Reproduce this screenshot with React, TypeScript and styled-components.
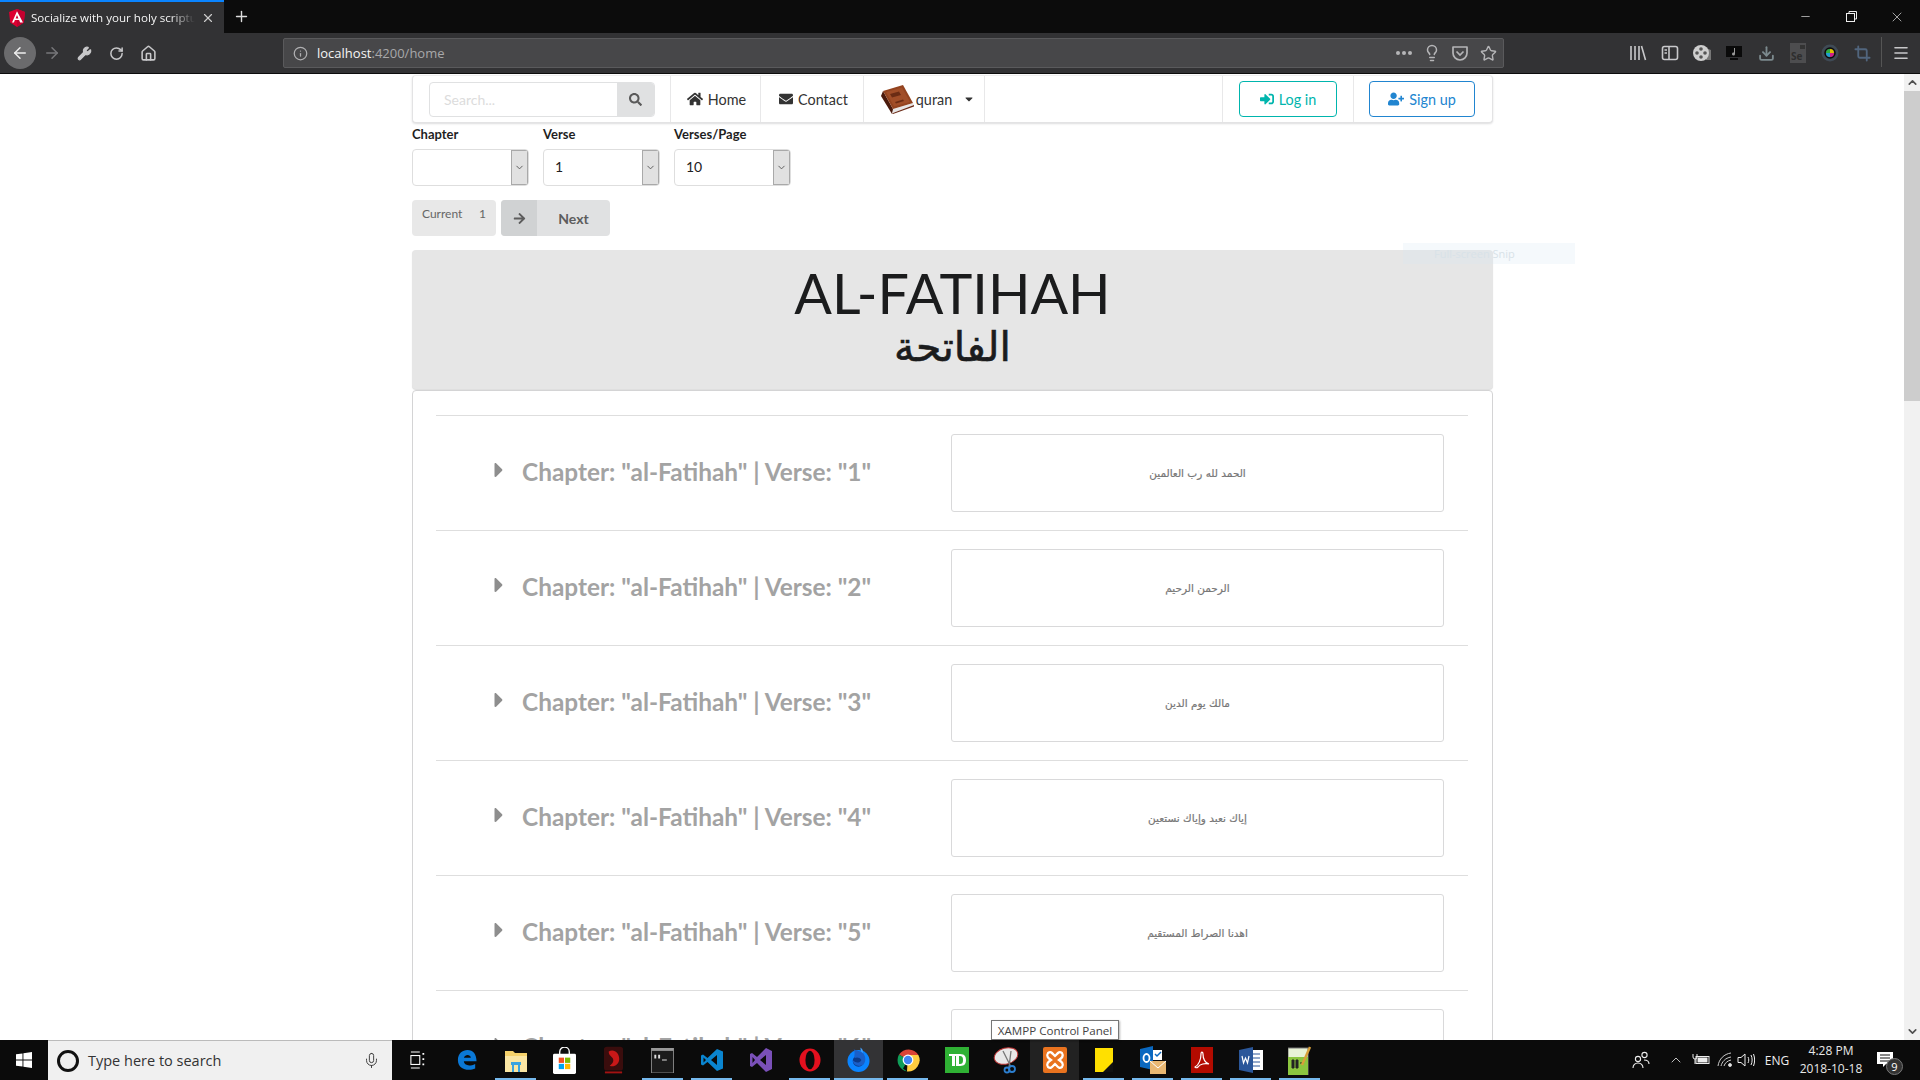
import React from "react";
import styled, { createGlobalStyle } from "styled-components";
import {
  FaHome, FaEnvelope, FaSearch, FaSignInAlt, FaUserPlus, FaArrowRight, FaCaretRight, FaCaretDown,
} from "react-icons/fa";
import { ArrowLeft, ArrowRight, Wrench, RotateCw, Home, Info, Lightbulb, Star, X, Plus, Minus, ChevronDown, ChevronUp, Mic, Download, Crop, Menu as MenuIcon } from "lucide-react";

const Global = createGlobalStyle`
  html, body { margin: 0; padding: 0; background: #fff; overflow: hidden; }
  * { box-sizing: border-box; }
  body { font-family: Lato, "Open Sans", sans-serif; }
`;

const Shell = styled.div`
  position: relative;
  width: 1920px;
  height: 1080px;
  display: flex;
  flex-direction: column;
  overflow: hidden;
`;

/* Browser chrome */
const TabStrip = styled.div`
  height: 33px;
  background: #0c0c0c;
  display: flex;
  align-items: stretch;
  color: #fff;
  font-family: "Open Sans", sans-serif;
`;
const Tab = styled.div`
  width: 224px;
  background: #323234;
  border-top: 2px solid #0a84ff;
  display: flex;
  align-items: center;
  padding: 0 9px;
  gap: 6px;
`;
const TabTitle = styled.span`
  flex: 1;
  font-size: 11.6px;
  white-space: nowrap;
  overflow: hidden;
  color: #f4f4f4;
  -webkit-mask-image: linear-gradient(90deg, #000 85%, transparent);
  mask-image: linear-gradient(90deg, #000 85%, transparent);
`;
const NewTab = styled.div`
  width: 34px;
  display: flex;
  align-items: center;
  justify-content: center;
  color: #ddd;
`;
const StripSpacer = styled.div`flex: 1;`;
const WindowButton = styled.div`
  width: 46px;
  display: flex;
  align-items: center;
  justify-content: center;
  color: #eee;
`;
const Toolbar = styled.div`
  height: 41px;
  background: #323234;
  border-bottom: 1px solid #0c0c0c;
  display: flex;
  align-items: center;
  padding-left: 4px;
`;
const ToolSlot = styled.div<{ $dim?: boolean; $round?: boolean }>`
  width: 32px;
  height: 32px;
  flex: none;
  display: flex;
  align-items: center;
  justify-content: center;
  border-radius: 50%;
  color: ${(p) => (p.$dim ? "#77777a" : "#c8c8ca")};
  background: ${(p) => (p.$round ? "#6b6b6d" : "transparent")};
`;
const UrlBar = styled.div`
  margin-left: 119px;
  width: 1221px;
  height: 30px;
  background: #474749;
  border: 1px solid #5a5a5c;
  border-radius: 2px;
  display: flex;
  align-items: center;
  padding: 0 1px 0 9px;
  font-family: "Open Sans", sans-serif;
  font-size: 13px;
  color: #a8a8aa;
`;
const UrlHost = styled.span`color: #f5f5f5; margin-left: 9px;`;
const UrlSpacer = styled.div`flex: 1;`;
const UrlAction = styled.div`
  width: 28px;
  display: flex;
  justify-content: center;
  color: #b5b5b7;
`;
const ToolGroup = styled.div`
  margin-left: 118px;
  display: flex;
`;
const ToolDivider = styled.div`
  width: 1px;
  height: 30px;
  background: #555;
  margin: 0 3px 0 3px;
`;

/* Page area */
const Viewport = styled.div`
  flex: 1;
  min-height: 0;
  display: flex;
`;
const PageScroll = styled.div`
  flex: 1;
  min-width: 0;
  overflow: hidden;
  padding-left: 412px;
`;
const Container = styled.div`
  width: 1081px;
`;
const Scrollbar = styled.div`
  width: 16px;
  background: #f1f1f1;
  display: flex;
  flex-direction: column;
  align-items: stretch;
`;
const ScrollArrow = styled.div`
  height: 17px;
  display: flex;
  align-items: center;
  justify-content: center;
  color: #505050;
`;
const ScrollTrack = styled.div`flex: 1;`;
const ScrollThumb = styled.div`
  height: 310px;
  background: #cdcdcd;
`;

const NavMenu = styled.nav`
  height: 48px;
  margin-top: 1px;
  background: #fff;
  border: 1px solid #e3e3e4;
  border-top-color: #eee;
  border-radius: 4px;
  box-shadow: 0 1px 2px rgba(34, 36, 38, 0.15);
  display: flex;
  align-items: stretch;
  font-size: 14.4px;
  color: #333;
`;
const NavItem = styled.div<{ $w: number; $pad?: number }>`
  width: ${(p) => p.$w}px;
  flex: none;
  display: flex;
  align-items: center;
  justify-content: center;
  gap: 5px;
  padding-left: ${(p) => p.$pad || 0}px;
  border-right: 1px solid #e8e8e9;
  white-space: nowrap;
`;
const SearchCell = styled.div`
  width: 258px;
  flex: none;
  display: flex;
  align-items: center;
  padding-left: 16px;
  border-right: 1px solid #e8e8e9;
`;
const SearchBox = styled.div`
  width: 226px;
  height: 35px;
  display: flex;
  border: 1px solid #e0e1e2;
  border-radius: 4px;
  overflow: hidden;
`;
const SearchInput = styled.div`
  flex: 1;
  color: #dcdcdc;
  padding-left: 14px;
  display: flex;
  align-items: center;
  font-size: 14px;
`;
const SearchButton = styled.div`
  width: 37px;
  background: #e0e1e2;
  color: #5a5a5a;
  display: flex;
  align-items: center;
  justify-content: center;
`;
const NavSpacer = styled.div`flex: 1;`;
const NavEnd = styled.div<{ $pad: string }>`
  flex: none;
  display: flex;
  align-items: center;
  padding: ${(p) => p.$pad};
  border-left: 1px solid #e8e8e9;
`;
const OutlineButton = styled.div<{ $c: string; $w: number }>`
  width: ${(p) => p.$w}px;
  height: 36px;
  border: 1px solid ${(p) => p.$c};
  border-radius: 4px;
  color: ${(p) => p.$c};
  display: flex;
  align-items: center;
  justify-content: center;
  gap: 5px;
  font-size: 14.4px;
`;
const BookWrap = styled.span`
  display: flex;
  margin-right: -4px;
`;
const Caret = styled.span`
  display: flex;
  margin-left: 6px;
  color: #333;
`;

const Filters = styled.div`
  display: flex;
  gap: 14px;
  margin-top: 1px;
`;
const Field = styled.div`
  width: 117px;
  display: flex;
  flex-direction: column;
`;
const FieldLabel = styled.label`
  height: 20px;
  margin-bottom: 5px;
  display: flex;
  align-items: center;
  font-size: 13px;
  font-weight: 700;
  color: #1f1f1f;
`;
const SelectBox = styled.div`
  height: 37px;
  border: 1px solid #dedede;
  border-radius: 4px;
  display: flex;
  font-size: 14px;
  color: #222;
  overflow: hidden;
`;
const SelectValue = styled.div`
  flex: 1;
  padding: 0 0 2px 11px;
  display: flex;
  align-items: center;
`;
const SelectArrow = styled.div`
  width: 17px;
  background: #e1e1e1;
  border: 1px solid #a9a9a9;
  display: flex;
  align-items: center;
  justify-content: center;
  color: #555;
`;
const Pager = styled.div`
  display: flex;
  gap: 5px;
  margin-top: 14px;
`;
const CurrentTag = styled.div`
  width: 84px;
  height: 36px;
  background: #e8e8e8;
  border-radius: 4px;
  color: #666;
  font-size: 12px;
  display: flex;
  justify-content: space-between;
  padding: 6px 10px 0;
`;
const NextButton = styled.div`
  width: 109px;
  height: 36px;
  background: #e0e1e2;
  border-radius: 4px;
  display: flex;
  overflow: hidden;
  color: #5d5d5d;
  font-size: 14px;
  font-weight: 700;
`;
const NextIcon = styled.div`
  width: 36px;
  background: #d0d2d3;
  display: flex;
  align-items: center;
  justify-content: center;
`;
const NextLabel = styled.div`
  flex: 1;
  display: flex;
  align-items: center;
  justify-content: center;
`;

const ChapterHeader = styled.header`
  margin-top: 14px;
  height: 139px;
  background: #e6e6e6;
  border-radius: 4px;
  box-shadow: 0 1px 1px rgba(0,0,0,0.14);
  text-align: center;
  color: #1b1c1d;
  overflow: hidden;
`;
const ChapterTitle = styled.h1`
  margin: 12px 0 0;
  font-size: 55.7px;
  line-height: 62px;
  font-weight: 400;
`;
const ChapterArabic = styled.div`
  font-family: "DejaVu Sans", sans-serif;
  font-size: 41px;
  line-height: 44px;
  margin-top: 1px;
  direction: rtl;
  -webkit-text-stroke: 0.6px #1b1c1d;
`;
const VerseCard = styled.section`
  margin-top: 1px;
  background: #fff;
  border: 1px solid #d4d4d5;
  border-radius: 4px;
  padding: 24px 24px 0 23px;
`;
const VerseRow = styled.div`
  height: 115px;
  border-top: 1px solid #dedede;
  padding: 18px 24px 0 0;
  display: flex;
`;
const VerseTitle = styled.div`
  flex: 1;
  height: 78px;
  display: flex;
  align-items: center;
  padding: 0 0 4px 51px;
  gap: 11px;
  font-size: 24.4px;
  font-weight: 700;
  color: #a3a3a3;
  white-space: nowrap;
`;
const CaretBox = styled.span`
  display: flex;
  margin-top: -3px;
  color: #8e8e8e;
`;
const VerseBox = styled.div`
  width: 493px;
  height: 78px;
  flex: none;
  border: 1px solid #d9d9da;
  border-radius: 3px;
  display: flex;
  align-items: center;
  justify-content: center;
  font-family: "DejaVu Sans", sans-serif;
  font-size: 10.5px;
  color: #777;
  direction: rtl;
  -webkit-text-stroke: 0.2px #777;
`;

/* Floating overlays */
const SnipHint = styled.div`
  position: absolute;
  left: 1403px;
  top: 243px;
  width: 172px;
  height: 21px;
  background: rgba(214, 232, 244, 0.25);
  color: #d8e2e8;
  font-family: "Open Sans", sans-serif;
  font-size: 11px;
  padding: 3px 0 0 31px;
`;
const WinTooltip = styled.div`
  position: absolute;
  left: 991px;
  top: 1020px;
  width: 128px;
  height: 20px;
  background: #fff;
  border: 1px solid #777;
  box-shadow: 1px 1px 2px rgba(0,0,0,0.3);
  font-family: "Open Sans", sans-serif;
  font-size: 11.6px;
  color: #444;
  display: flex;
  align-items: center;
  justify-content: center;
  white-space: nowrap;
`;

/* Taskbar */
const Taskbar = styled.footer`
  height: 40px;
  flex: none;
  background: #0b0b0b;
  display: flex;
  align-items: stretch;
  color: #eee;
  font-family: "Open Sans", sans-serif;
`;
const StartButton = styled.div`
  width: 48px;
  display: flex;
  align-items: center;
  justify-content: center;
`;
const TaskSearch = styled.div`
  width: 344px;
  margin-right: 1px;
  background: #f0f0f0;
  border-top: 1px solid #bbb;
  display: flex;
  align-items: center;
  padding: 0 12px 0 9px;
  color: #333;
  font-size: 14.5px;
`;
const Cortana = styled.div`
  width: 22px;
  height: 22px;
  border: 3px solid #111;
  border-radius: 50%;
  margin-right: 9px;
`;
const TaskSearchText = styled.span`flex: 1;`;
const TaskSlot = styled.div<{ $bg?: string }>`
  position: relative;
  width: 49px;
  flex: none;
  display: flex;
  align-items: center;
  justify-content: center;
  background: ${(p) => p.$bg || "transparent"};
`;
const RunningMark = styled.div<{ $wide?: boolean }>`
  position: absolute;
  bottom: 0;
  left: ${(p) => (p.$wide ? "0" : "4px")};
  right: ${(p) => (p.$wide ? "0" : "4px")};
  height: 2px;
  background: #76b9ed;
`;
const TaskSpacer = styled.div`flex: 1;`;
const TrayIcon = styled.div<{ $w: number }>`
  width: ${(p) => p.$w}px;
  flex: none;
  display: flex;
  align-items: center;
  justify-content: center;
  font-size: 12px;
`;
const Clock = styled.div`
  width: 72px;
  flex: none;
  display: flex;
  flex-direction: column;
  align-items: center;
  justify-content: center;
  font-size: 12px;
  line-height: 18px;
  color: #e8e8e8;
  white-space: nowrap;
`;
const NotifyWrap = styled.div`
  position: relative;
  width: 38px;
  flex: none;
  display: flex;
  align-items: center;
  justify-content: center;
  margin-right: 15px;
`;
const NotifyBadge = styled.div`
  position: absolute;
  left: 19px;
  top: 18px;
  width: 17px;
  height: 17px;
  border-radius: 50%;
  background: #333;
  border: 1px solid #777;
  font-size: 11px;
  color: #fff;
  display: flex;
  align-items: center;
  justify-content: center;
`;

/* Drawn icons */
const AngularIcon = () => (
  <svg width="16" height="18" viewBox="0 0 16 18">
    <path d="M8 0 0 3l1.200 10.600L8 18l6.800-4.400L16 3z" fill="#dd0031" />
    <path d="M8 0v18l6.800-4.400L16 3z" fill="#c3002f" />
    <path d="M8 2.200 3 13.500h1.900l1-2.500h4.200l1 2.500H14zM6.600 9.400 8 6l1.400 3.400z" fill="#fff" />
  </svg>
);
const BookIcon = () => (
  <svg width="34" height="30" viewBox="0 0 34 30">
    <path d="M2 7 0 12l11 18 1-5z" fill="#4a1a0c" />
    <path d="M12 25 32 19l1 2-21 8z" fill="#e6e6e6" />
    <path d="M11 30l1-1 21-8v1.500L12 30z" fill="#6b2a16" />
    <path d="M2 7 22 1l10 18-20 6z" fill="#93431f" />
    <path d="M5 8 21 3.500 29 18l-16 4.500z" fill="#a14e28" />
    <path d="M9 10 18 7.500 20 11 11 13.500zM14 18l8-2.500 1 1.500-8 2.500z" fill="#6b2c14" />
  </svg>
);
const LibraryIcon = () => (
  <svg width="18" height="18" viewBox="0 0 18 18" stroke="#c8c8ca" strokeWidth="1.6" fill="none">
    <path d="M2 2v14M6 2v14M10 2v14M12.500 2l4 14" />
  </svg>
);
const SidebarIcon = () => (
  <svg width="18" height="18" viewBox="0 0 18 18" fill="none" stroke="#c8c8ca" strokeWidth="1.6">
    <rect x="1.500" y="2.500" width="15" height="13" rx="2" />
    <path d="M8 3v12M3.500 6H6M3.500 9H6" />
  </svg>
);
const FilmIcon = () => (
  <svg width="20" height="20" viewBox="0 0 20 20">
    <path d="M14 5l5 2v10h-5z" fill="#777" />
    <circle cx="9" cy="10" r="8" fill="#cfcfcf" />
    <circle cx="9" cy="6" r="1.800" fill="#555" />
    <circle cx="9" cy="14" r="1.800" fill="#555" />
    <circle cx="5" cy="10" r="1.800" fill="#555" />
    <circle cx="13" cy="10" r="1.800" fill="#555" />
  </svg>
);
const MonitorIcon = () => (
  <svg width="18" height="18" viewBox="0 0 18 18">
    <rect x="1" y="2" width="16" height="11" fill="#0a0a0a" />
    <rect x="5" y="14" width="8" height="2" fill="#0a0a0a" />
    <path d="M10 4v6a1.500 1.500 0 1 1-1-1.400V4z" fill="#999" />
  </svg>
);
const SeIcon = () => (
  <svg width="16" height="20" viewBox="0 0 16 20">
    <rect width="16" height="20" fill="#4d4d4f" />
    <rect x="10" y="2" width="5" height="4" fill="#333" />
    <text x="1" y="17" fontSize="10" fontWeight="700" fontFamily="Open Sans" fill="#2e2e2e">Se</text>
  </svg>
);
const WheelIcon = () => (
  <svg width="18" height="18" viewBox="0 0 18 18">
    <circle cx="9" cy="9" r="8.500" fill="#3f4a55" />
    <circle cx="9" cy="9" r="5" fill="none" stroke="#0c0c0c" strokeWidth="1.500" />
    <path d="M9 5a4 4 0 0 1 4 4H9z" fill="#e0c000" />
    <path d="M13 9a4 4 0 0 1-4 4V9z" fill="#d0208a" />
    <path d="M9 13a4 4 0 0 1-4-4h4z" fill="#20a0d0" />
    <path d="M5 9a4 4 0 0 1 4-4v4z" fill="#30b040" />
  </svg>
);
const PocketIcon = () => (
  <svg width="18" height="18" viewBox="0 0 18 18" fill="none" stroke="#b5b5b7" strokeWidth="1.700">
    <path d="M2 3h14v6a7 7 0 0 1-14 0z" strokeLinejoin="round" />
    <path d="M5.500 7.500 9 11l3.500-3.500" />
  </svg>
);
const WindowsLogo = () => (
  <svg width="16" height="16" viewBox="0 0 16 16" fill="#fff">
    <path d="M0 2.300 6.500 1.400v6.100H0zM7.400 1.300 16 0v7.500H7.400zM0 8.400h6.500v6.200L0 13.700zM7.400 8.400H16V16l-8.600-1.200z" />
  </svg>
);
const TaskViewIcon = () => (
  <svg width="16" height="18" viewBox="0 0 18 20" fill="none" stroke="#fff" strokeWidth="1.200">
    <path d="M1 1h10M1 19h10" />
    <rect x="1" y="5" width="10" height="10" />
    <path d="M15 2v2M15 8v2M15 14v2" strokeWidth="2" />
  </svg>
);
const EdgeIcon = () => (
  <svg width="20" height="22" viewBox="0 0 22 24">
    <path d="M1 12C1 5 6 1 11.500 1 18 1 21.500 6 21.500 13.500H7.500c.3 4.500 6 6 12.500 2.800v5C13 24.500 1 23 1 12zM7.600 9.600h7.600C15 6 9 5.200 7.600 9.600z" fill="#0a78d7" />
  </svg>
);
const FolderIcon = () => (
  <svg width="22" height="24" viewBox="0 0 22 24">
    <path d="M0 3h8l2 2h12v19H0z" fill="#f6d26b" />
    <path d="M0 8h22v16H0z" fill="#fbe6a3" />
    <path d="M6 14h10v3H6zM7 17h2v7H7zM13 17h2v7h-2z" fill="#3aa3e0" />
  </svg>
);
const StoreIcon = () => (
  <svg width="23" height="27" viewBox="0 0 24 28">
    <path d="M7 8V5a5 5 0 0 1 10 0v3" fill="none" stroke="#fff" strokeWidth="1.400" />
    <rect y="7" width="24" height="21" rx="1.500" fill="#fff" />
    <rect x="6" y="11" width="5.500" height="5.500" fill="#f25022" />
    <rect x="12.500" y="11" width="5.500" height="5.500" fill="#7fba00" />
    <rect x="6" y="17.500" width="5.500" height="5.500" fill="#00a4ef" />
    <rect x="12.500" y="17.500" width="5.500" height="5.500" fill="#ffb900" />
  </svg>
);
const RedAppIcon = () => (
  <svg width="21" height="28" viewBox="0 0 22 28">
    <rect x="1" y="0" width="20" height="25" rx="3" fill="#3a0d0d" />
    <path d="M6 5c6-3 11 2 11 8s-6 9-10 7c3-2 5-5 3-8S6 9 6 5z" fill="#c81818" />
    <path d="M2 26h18v2H2z" fill="#a31212" />
  </svg>
);
const CmdIcon = () => (
  <svg width="23" height="25" viewBox="0 0 23 26">
    <rect width="23" height="26" fill="#1b1b1b" stroke="#888" />
    <rect width="23" height="3" fill="#999" />
    <path d="M3 7h2v4H3zM7 7h2v4H7zM11 12h5v1h-5z" fill="#ddd" />
  </svg>
);
const VsCodeIcon = () => (
  <svg width="24" height="24" viewBox="0 0 24 24">
    <path d="M17 1 7.500 10 3 6.500 1 7.500v9l2 1L7.500 14l9.500 9 6-2.500v-17zM17 7v10l-6-5zM3.500 9.500 6 12l-2.500 2.500z" fill="#0a85d0" />
  </svg>
);
const VsIcon = () => (
  <svg width="24" height="26" viewBox="0 0 24 26">
    <path d="M17 1 8 10 3 6 1 7v12l2 1 5-4 9 9 6-3V4zM17 8v10l-6-5zM3.500 10 6 13l-2.500 3z" fill="#7a50b8" />
  </svg>
);
const OperaIcon = () => (
  <svg width="22" height="26" viewBox="0 0 24 26">
    <ellipse cx="12" cy="13" rx="11.500" ry="12.500" fill="#e3101e" />
    <ellipse cx="12" cy="13" rx="5" ry="10" fill="#0b0b0b" />
  </svg>
);
const FirefoxIcon = () => (
  <svg width="23" height="26" viewBox="0 0 24 26">
    <circle cx="12" cy="14" r="11.500" fill="#0a84ff" />
    <circle cx="12" cy="14" r="6" fill="#0b3a8a" />
    <path d="M7 2c2 4 0 6 1 9 2-1 5-1 7 2-2 4-7 3-9 0 0 5 6 8 11 5 3-3 3-9-1-13-2-1-5-2-9-3z" fill="#1a5fc8" />
    <path d="M14 0c3 2 3 4 2 6-1-2-2-3-2-6z" fill="#45a1ff" />
  </svg>
);
const ChromeIcon = () => (
  <svg width="24" height="24" viewBox="0 0 24 24">
    <path d="M12 12 3 6.600A11.500 11.500 0 0 1 22.400 7H12z" fill="#db4437" />
    <path d="M12 12 7 20.500 11 23.500A11.500 11.500 0 0 1 3 6.600z" fill="#0f9d58" />
    <path d="M12 7h10.400A11.500 11.500 0 0 1 11 23.500z" fill="#ffcd40" />
    <circle cx="12" cy="12" r="5.400" fill="#fff" />
    <circle cx="12" cy="12" r="4.200" fill="#4285f4" />
  </svg>
);
const TdIcon = () => (
  <svg width="24" height="26" viewBox="0 0 24 26">
    <rect width="24" height="26" fill="#2fb134" />
    <path d="M4 7h9v2h-3v10H7V9H4zM11 7h4c5 0 6 3 6 6s-1 6-6 6h-4v-2h4c2 0 3-1 3-4s-1-4-3-4h-1v8h-3z" fill="#fff" />
  </svg>
);
const SnipIcon = () => (
  <svg width="26" height="28" viewBox="0 0 26 28">
    <ellipse cx="13" cy="10" rx="12" ry="8" transform="rotate(-15 13 10)" fill="#e8e8e8" stroke="#b33" strokeWidth="1" />
    <path d="M10 5l8 16M18 5l-2 16" stroke="#777" strokeWidth="1.300" />
    <circle cx="19" cy="23" r="3" fill="none" stroke="#2c7fd0" strokeWidth="1.800" />
    <circle cx="14" cy="24" r="2.500" fill="none" stroke="#2c7fd0" strokeWidth="1.800" />
  </svg>
);
const XamppIcon = () => (
  <svg width="24" height="26" viewBox="0 0 24 26">
    <rect width="24" height="26" rx="2" fill="#e9731f" />
    <path d="M5 6c3-2 4 0 7 3 3-3 4-5 7-3 2 3 0 5-3 7 3 2 5 4 3 7-3 2-4 0-7-3-3 3-4 5-7 3-2-3 0-5 3-7-3-2-5-4-3-7z" fill="none" stroke="#fff" strokeWidth="2.200" />
  </svg>
);
const StickyIcon = () => (
  <svg width="18" height="24" viewBox="0 0 18 24">
    <rect width="18" height="24" fill="#ffe000" />
    <path d="M18 14v10H8z" fill="#111" />
  </svg>
);
const OutlookIcon = () => (
  <svg width="26" height="28" viewBox="0 0 26 28">
    <path d="M0 3 13 0v24L0 21z" fill="#0a68c0" />
    <rect x="13" y="4" width="9" height="10" fill="#fff" />
    <path d="M15 8l2 2 4-4" stroke="#0a68c0" strokeWidth="1.500" fill="none" />
    <ellipse cx="6.500" cy="12" rx="3" ry="4" fill="none" stroke="#fff" strokeWidth="1.800" />
    <rect x="10" y="15" width="16" height="13" fill="#e9b873" />
    <path d="M10 15l8 7 8-7" stroke="#fff" fill="none" />
  </svg>
);
const AcrobatIcon = () => (
  <svg width="22" height="26" viewBox="0 0 22 26">
    <rect width="22" height="26" fill="#b30b00" />
    <path d="M4 20c4-2 6-8 6-13 0-3 2-2 2 0 0 6 3 9 6 10-4-1-9 0-11 3-1 1-3 1-3 0z" fill="none" stroke="#fff" strokeWidth="1.200" />
  </svg>
);
const WordIcon = () => (
  <svg width="24" height="26" viewBox="0 0 24 26">
    <rect x="10" y="3" width="14" height="20" fill="#fff" />
    <path d="M13 7h8M13 11h8M13 15h8M13 19h8" stroke="#2b579a" />
    <path d="M0 3 14 0v26L0 23z" fill="#2b579a" />
    <path d="M3 9l1.500 7 2-5 2 5L10 9" stroke="#fff" strokeWidth="1.200" fill="none" />
  </svg>
);
const NotepadIcon = () => (
  <svg width="24" height="30" viewBox="0 0 24 30">
    <rect x="0" y="3" width="20" height="27" fill="#e8f3d6" stroke="#777" />
    <rect x="0" y="12" width="20" height="18" fill="#8cc63f" />
    <path d="M4 15h2v8H4zM8 15h2v8H8zM12 18h4" stroke="#222" strokeWidth="1" fill="#222" />
    <path d="M22 2 14 20" stroke="#d9a13a" strokeWidth="2.400" />
  </svg>
);

const PeopleIcon = () => (
  <svg width="18" height="18" viewBox="0 0 18 18" fill="none" stroke="#eee" strokeWidth="1.100">
    <circle cx="6" cy="8" r="2.600" />
    <path d="M1 17c0-3 2-5 5-5s5 2 5 5" />
    <circle cx="12.500" cy="4" r="2.600" />
    <path d="M12 9c3 0 5 1.500 5 4" />
  </svg>
);
const BatteryIcon = () => (
  <svg width="18" height="16" viewBox="0 0 18 16" fill="none" stroke="#eee" strokeWidth="1">
    <rect x="4" y="4.500" width="13" height="7" />
    <rect x="6" y="6" width="9" height="4" fill="#eee" />
    <path d="M1 2v3a2 2 0 0 0 4 0V2M3 7v5" />
  </svg>
);
const WifiIcon = () => (
  <svg width="16" height="16" viewBox="0 0 16 16" fill="none" stroke="#ccc" strokeWidth="1">
    <path d="M1 14C2 7 7 2 14 1M4 14c1-4 4-8 10-9M7 14c1-3 3-5 7-6" />
    <circle cx="13" cy="13" r="1.500" fill="#eee" />
  </svg>
);
const SpeakerIcon = () => (
  <svg width="18" height="16" viewBox="0 0 18 16" fill="none" stroke="#eee" strokeWidth="1">
    <path d="M1 5.500h3L8 2v12L4 10.500H1z" />
    <path d="M11 5c1 2 1 4 0 6M14 3c1.500 3 1.500 7 0 10M16.500 2c1.500 4 1.500 8 0 12" />
  </svg>
);
const NotifyIcon = () => (
  <svg width="18" height="16" viewBox="0 0 18 16">
    <path d="M0 0h16v12H9l-3 3v-3H0z" fill="#fff" />
    <path d="M3 3h10M3 6h10M3 9h10" stroke="#111" />
  </svg>
);

const taskApps: { key: string; icon: React.ReactNode; mark?: boolean; wide?: boolean; bg?: string }[] = [
  { key: "view", icon: <TaskViewIcon /> },
  { key: "edge", icon: <EdgeIcon /> },
  { key: "folder", icon: <FolderIcon />, mark: true },
  { key: "store", icon: <StoreIcon /> },
  { key: "red", icon: <RedAppIcon /> },
  { key: "cmd", icon: <CmdIcon />, mark: true },
  { key: "code", icon: <VsCodeIcon />, mark: true },
  { key: "vs", icon: <VsIcon /> },
  { key: "opera", icon: <OperaIcon />, mark: true },
  { key: "firefox", icon: <FirefoxIcon />, mark: true, wide: true, bg: "#333335" },
  { key: "chrome", icon: <ChromeIcon />, mark: true },
  { key: "td", icon: <TdIcon /> },
  { key: "snip", icon: <SnipIcon /> },
  { key: "xampp", icon: <XamppIcon />, bg: "#222" },
  { key: "sticky", icon: <StickyIcon />, mark: true },
  { key: "outlook", icon: <OutlookIcon />, mark: true },
  { key: "acrobat", icon: <AcrobatIcon />, mark: true },
  { key: "word", icon: <WordIcon />, mark: true },
  { key: "notepad", icon: <NotepadIcon />, mark: true },
];

const verses = [
  "الحمد لله رب العالمين",
  "الرحمن الرحيم",
  "مالك يوم الدين",
  "إياك نعبد وإياك نستعين",
  "اهدنا الصراط المستقيم",
  "صراط الذين أنعمت عليهم",
];

const filters = [
  { label: "Chapter", value: "" },
  { label: "Verse", value: "1" },
  { label: "Verses/Page", value: "10" },
];

export default function App() {
  return (
    <Shell>
      <Global />
      <TabStrip>
        <Tab>
          <AngularIcon />
          <TabTitle>Socialize with your holy scripture</TabTitle>
          <X size={14} color="#ccc" />
        </Tab>
        <NewTab><Plus size={17} /></NewTab>
        <StripSpacer />
        <WindowButton><Minus size={13} strokeWidth={1.2} /></WindowButton>
        <WindowButton>
          <svg width="11" height="11" viewBox="0 0 11 11" fill="none" stroke="#eee"><rect x="0.5" y="2.5" width="8" height="8" /><path d="M3 2.500V.5h7.500V8H8.500" /></svg>
        </WindowButton>
        <WindowButton><X size={16} strokeWidth={1} /></WindowButton>
      </TabStrip>
      <Toolbar>
        <ToolSlot $round><ArrowLeft size={18} color="#eee" /></ToolSlot>
        <ToolSlot $dim><ArrowRight size={18} /></ToolSlot>
        <ToolSlot><Wrench size={15} fill="#c8c8ca" /></ToolSlot>
        <ToolSlot><RotateCw size={15} strokeWidth={2.4} /></ToolSlot>
        <ToolSlot><Home size={17} strokeWidth={2.2} /></ToolSlot>
        <UrlBar>
          <Info size={15} color="#b0b0b2" />
          <UrlHost>localhost</UrlHost>:4200/home
          <UrlSpacer />
          <UrlAction>
            <svg width="16" height="4" viewBox="0 0 16 4" fill="#b5b5b7"><circle cx="2" cy="2" r="2" /><circle cx="8" cy="2" r="2" /><circle cx="14" cy="2" r="2" /></svg>
          </UrlAction>
          <UrlAction><Lightbulb size={18} /></UrlAction>
          <UrlAction><PocketIcon /></UrlAction>
          <UrlAction><Star size={17} strokeWidth={2} /></UrlAction>
        </UrlBar>
        <ToolGroup>
          <ToolSlot><LibraryIcon /></ToolSlot>
          <ToolSlot><SidebarIcon /></ToolSlot>
          <ToolSlot><FilmIcon /></ToolSlot>
          <ToolSlot><MonitorIcon /></ToolSlot>
          <ToolSlot $dim><Download size={17} color="#7c8a8e" strokeWidth={2.6} /></ToolSlot>
          <ToolSlot><SeIcon /></ToolSlot>
          <ToolSlot><WheelIcon /></ToolSlot>
          <ToolSlot><Crop size={17} color="#51657d" strokeWidth={2.6} /></ToolSlot>
          <ToolDivider />
          <ToolSlot><MenuIcon size={18} strokeWidth={2.2} /></ToolSlot>
        </ToolGroup>
      </Toolbar>

      <Viewport>
        <PageScroll>
          <Container>
            <NavMenu>
              <SearchCell>
                <SearchBox>
                  <SearchInput>Search...</SearchInput>
                  <SearchButton><FaSearch size={13} /></SearchButton>
                </SearchBox>
              </SearchCell>
              <NavItem $w={90} $pad={2}><FaHome size={16} />Home</NavItem>
              <NavItem $w={103} $pad={3}><FaEnvelope size={14} />Contact</NavItem>
              <NavItem $w={121} $pad={8}>
                <BookWrap><BookIcon /></BookWrap>quran
                <Caret><FaCaretDown size={12} /></Caret>
              </NavItem>
              <NavSpacer />
              <NavEnd $pad="0 16px">
                <OutlineButton $c="#00b5ad" $w={98}><FaSignInAlt size={14} />Log in</OutlineButton>
              </NavEnd>
              <NavEnd $pad="0 17px 0 15px">
                <OutlineButton $c="#2185d0" $w={106}><FaUserPlus size={16} />Sign up</OutlineButton>
              </NavEnd>
            </NavMenu>
            <Filters>
              {filters.map((f) => (
                <Field key={f.label}>
                  <FieldLabel>{f.label}</FieldLabel>
                  <SelectBox>
                    <SelectValue>{f.value}</SelectValue>
                    <SelectArrow><ChevronDown size={11} /></SelectArrow>
                  </SelectBox>
                </Field>
              ))}
            </Filters>
            <Pager>
              <CurrentTag><span>Current</span><span>1</span></CurrentTag>
              <NextButton>
                <NextIcon><FaArrowRight size={13} /></NextIcon>
                <NextLabel>Next</NextLabel>
              </NextButton>
            </Pager>
            <ChapterHeader>
              <ChapterTitle>AL-FATIHAH</ChapterTitle>
              <ChapterArabic>الفاتحة</ChapterArabic>
            </ChapterHeader>
            <VerseCard>
              {verses.map((v, i) => (
                <VerseRow key={v}>
                  <VerseTitle>
                    <CaretBox><FaCaretRight size={24} /></CaretBox>
                    Chapter: "al-Fatihah" | Verse: "{i + 1}"
                  </VerseTitle>
                  <VerseBox>{v}</VerseBox>
                </VerseRow>
              ))}
            </VerseCard>
          </Container>
        </PageScroll>
        <Scrollbar>
          <ScrollArrow><ChevronUp size={13} strokeWidth={3} /></ScrollArrow>
          <ScrollThumb />
          <ScrollTrack />
          <ScrollArrow><ChevronDown size={13} strokeWidth={3} /></ScrollArrow>
        </Scrollbar>
      </Viewport>

      <Taskbar>
        <StartButton><WindowsLogo /></StartButton>
        <TaskSearch>
          <Cortana />
          <TaskSearchText>Type here to search</TaskSearchText>
          <Mic size={17} strokeWidth={1.3} />
        </TaskSearch>
        {taskApps.map((a) => (
          <TaskSlot key={a.key} $bg={a.bg}>
            {a.icon}
            {a.mark && <RunningMark $wide={a.wide} />}
          </TaskSlot>
        ))}
        <TaskSpacer />
        <TrayIcon $w={30}><PeopleIcon /></TrayIcon>
        <TrayIcon $w={11} />
        <TrayIcon $w={18}><ChevronUp size={16} strokeWidth={1.2} /></TrayIcon>
        <TrayIcon $w={32}><BatteryIcon /></TrayIcon>
        <TrayIcon $w={16}><WifiIcon /></TrayIcon>
        <TrayIcon $w={26}><SpeakerIcon /></TrayIcon>
        <TrayIcon $w={36}>ENG</TrayIcon>
        <Clock><span>4:28 PM</span><span>2018-10-18</span></Clock>
        <NotifyWrap>
          <NotifyIcon />
          <NotifyBadge>9</NotifyBadge>
        </NotifyWrap>
      </Taskbar>

      <SnipHint>Full-screen Snip</SnipHint>
      <WinTooltip>XAMPP Control Panel</WinTooltip>
    </Shell>
  );
}
